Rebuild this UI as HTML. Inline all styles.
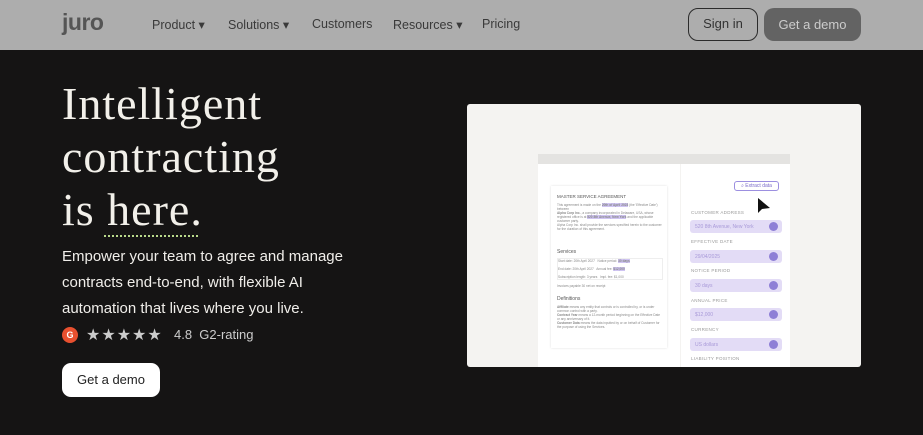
<!DOCTYPE html>
<html><head><meta charset="utf-8"><style>
*{margin:0;padding:0;box-sizing:border-box}
body{width:923px;height:435px;overflow:hidden;background:#151414;font-family:"Liberation Sans",sans-serif;position:relative}
.nav{position:absolute;left:0;top:0;width:923px;height:50px;background:#adadad}
.nav span{position:absolute;top:17px;font-size:12.5px;color:#3a3a3a}
.logo{position:absolute;left:62px;top:9px;font-size:23px;font-weight:bold;color:#555;letter-spacing:-0.5px}
.abs{position:absolute}
h1{position:absolute;left:62px;top:77px;font-family:"Liberation Serif",serif;font-weight:normal;color:#f2f0ea;font-size:46px;line-height:53px;letter-spacing:1px}
.p{position:absolute;left:62px;top:244px;color:#f0eeea;font-size:15px;line-height:26px;width:300px}
.lbl{position:absolute;left:691px;font-size:4.5px;color:#999;letter-spacing:.3px}
.fld{position:absolute;left:690px;width:92px;height:13px;background:#e3dcf6;border-radius:3px;font-size:5px;color:#a899d8;padding:4px 5px}
.fld:after{content:"";position:absolute;right:4px;top:2px;width:9px;height:9px;border-radius:50%;background:#8e7fd6}
.t{position:absolute;font-size:3.2px;color:#888;line-height:4px}
</style></head><body>
<div class="nav">
<div class="logo">juro</div>
<span style="left:152px">Product ▾</span>
<span style="left:228px">Solutions ▾</span>
<span style="left:312px">Customers</span>
<span style="left:393px">Resources ▾</span>
<span style="left:482px">Pricing</span>
<div class="abs" style="left:688px;top:8px;width:70px;height:33px;border:1.5px solid #2b2b2b;border-radius:10px;font-size:13px;color:#333;text-align:center;line-height:30px">Sign in</div>
<div class="abs" style="left:764px;top:8px;width:97px;height:33px;background:#636363;border-radius:10px;font-size:13px;color:#ccc;text-align:center;line-height:33px">Get a demo</div>
</div>
<h1>Intelligent<br>contracting<br>is here.</h1>
<div class="abs" style="left:104px;top:235px;width:94px;border-top:2px dotted #b8d98a"></div>
<div class="p">Empower your team to agree and manage contracts end-to-end, with flexible AI automation that lives where you live.</div>
<div class="abs" style="left:62px;top:327px;width:16px;height:16px;border-radius:50%;background:#e8502f;color:#fff;font-size:9px;font-weight:bold;text-align:center;line-height:16px">G</div>
<div class="abs" style="left:86px;top:325px;font-size:16px;color:#ccc;letter-spacing:1px">★★★★★</div>
<div class="abs" style="left:174px;top:327px;font-size:13px;color:#ccc">4.8&nbsp; G2-rating</div>
<div class="abs" style="left:62px;top:363px;width:98px;height:34px;background:#fff;border-radius:9px;font-size:13px;color:#222;text-align:center;line-height:34px">Get a demo</div>

<div class="abs" style="left:467px;top:104px;width:394px;height:263px;background:#f4f3f1;border-radius:3px"></div>
<div class="abs" style="left:538px;top:154px;width:252px;height:10px;background:#e4e3e1"></div>
<div class="abs" style="left:538px;top:164px;width:142px;height:203px;background:#fff"></div>
<div class="abs" style="left:681px;top:164px;width:109px;height:203px;background:#fff"></div>
<div class="abs" style="left:551px;top:186px;width:116px;height:162px;background:#fff;box-shadow:0 0 2px #ddd"></div>
<div class="t" style="left:557px;top:195px;font-size:4.5px;color:#555">MASTER SERVICE AGREEMENT</div>
<div class="t" style="left:557px;top:203px;width:106px">This agreement is made on the <b style="background:#cfc4f2">20th of April 2023</b> (the 'Effective Date')<br>between<br><b>Alpha Corp Inc.</b>, a company incorporated in Delaware, USA, whose registered office is at <b style="background:#cfc4f2">520 8th Avenue, New York</b> and the applicable customer party.<br>Alpha Corp Inc. shall provide the services specified herein to the customer for the duration of this agreement.</div>
<div class="t" style="left:557px;top:250px;font-size:5px;color:#555">Services</div>
<div class="t" style="left:557px;top:258px;width:106px;border:0.5px solid #eee">Start date: 20th April 2027 &nbsp; Notice period: <b style="background:#cfc4f2">30 days</b><br><br>End date: 20th April 2027 &nbsp; Annual fee: <b style="background:#cfc4f2">$12,000</b><br><br>Subscription length: 3 years &nbsp; Impl. fee: $1,000</div>
<div class="t" style="left:557px;top:284px">Invoices payable 30 net on receipt</div>
<div class="t" style="left:557px;top:297px;font-size:5px;color:#555">Definitions</div>
<div class="t" style="left:557px;top:305px;width:106px"><b>Affiliate</b> means any entity that controls or is controlled by, or is under common control with a party.<br><b>Contract Year</b> means a 12-month period beginning on the Effective Date or any anniversary of it.<br><b>Customer Data</b> means the data inputted by or on behalf of Customer for the purpose of using the Services.</div>
<div class="abs" style="left:734px;top:181px;width:45px;height:10px;border:1px solid #9c8fe0;border-radius:3px;font-size:5px;color:#7b6cc9;text-align:center;line-height:8px">⌕ Extract data</div>
<svg class="abs" style="left:757px;top:197px" width="14" height="18"><path d="M1 1 L1 16 L5 12 L13 11 Z" fill="#111"/></svg>
<div class="lbl" style="top:210px">CUSTOMER ADDRESS</div>
<div class="fld" style="top:220px">520 8th Avenue, New York</div>
<div class="lbl" style="top:239px">EFFECTIVE DATE</div>
<div class="fld" style="top:250px">29/04/2025</div>
<div class="lbl" style="top:268px">NOTICE PERIOD</div>
<div class="fld" style="top:279px">30 days</div>
<div class="lbl" style="top:298px">ANNUAL PRICE</div>
<div class="fld" style="top:308px">$12,000</div>
<div class="lbl" style="top:327px">CURRENCY</div>
<div class="fld" style="top:338px">US dollars</div>
<div class="lbl" style="top:356px">LIABILITY POSITION</div>
</body></html>
